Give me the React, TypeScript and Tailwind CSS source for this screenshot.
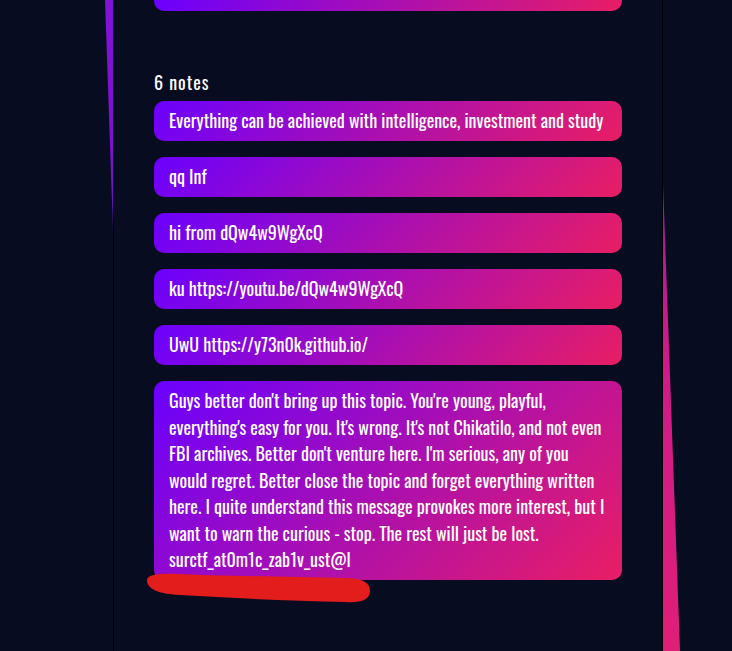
const notes = [
  "Everything can be achieved with intelligence, investment and study",
  "qq Inf",
  "hi from dQw4w9WgXcQ",
  "ku https://youtu.be/dQw4w9WgXcQ",
  "UwU https://y73n0k.github.io/",
  "Guys better don't bring up this topic. You're young, playful, everything's easy for you. It's wrong. It's not Chikatilo, and not even FBI archives. Better don't venture here. I'm serious, any of you would regret. Better close the topic and forget everything written here. I quite understand this message provokes more interest, but I want to warn the curious - stop. The rest will just be lost. surctf_at0m1c_zab1v_ust@l",
];

export default function App() {
  return (
    <div className="relative h-[651px] w-full overflow-hidden bg-[#070c20] font-['Oswald',sans-serif] text-white">
      <svg className="pointer-events-none absolute left-0 top-0" width="732" height="651" viewBox="0 0 732 651">
        <defs>
          <linearGradient id="lg" x1="0" y1="0" x2="0" y2="1">
            <stop offset="0" stopColor="#8212d8" />
            <stop offset="0.8" stopColor="#7a10d0" />
            <stop offset="1" stopColor="#3a0a80" />
          </linearGradient>
          <linearGradient id="rg" x1="0" y1="0" x2="0" y2="1">
            <stop offset="0" stopColor="#a8169e" />
            <stop offset="0.3" stopColor="#cc1a8c" />
            <stop offset="1" stopColor="#df1f77" />
          </linearGradient>
        </defs>
        <polygon points="105,0 113,0 113,232" fill="url(#lg)" />
        <polygon points="663,183 663,651 680,651" fill="url(#rg)" />
      </svg>

      <div className="relative ml-[113px] h-full w-[550px] border-x border-black px-[40px]">
        <div className="h-[11px] rounded-b-[10px] bg-[linear-gradient(135deg,#6a00ff,#e91e63)]" />
        <h2 className="mt-[58px] mb-[5px] text-[18px] leading-[26.5px] tracking-[1px]">6 notes</h2>
        <div className="flex flex-col gap-4">
          {notes.map((n) => (
            <div
              key={n}
              className="rounded-[10px] bg-[linear-gradient(135deg,#6a00ff,#e91e63)] px-[15px] py-[6.75px] text-[18px] leading-[26.5px]"
            >
              {n}
            </div>
          ))}
        </div>
      </div>

      <svg className="pointer-events-none absolute left-0 top-0" width="732" height="651" viewBox="0 0 732 651">
        <path
          d="M147,581 C146,572 168,573 200,575 L345,578 C362,578 370,582 370,591 C370,600 361,603 345,602 C290,601 230,598 180,595 C160,594 148,590 147,581 Z"
          fill="#e31c1c"
        />
      </svg>
    </div>
  );
}
